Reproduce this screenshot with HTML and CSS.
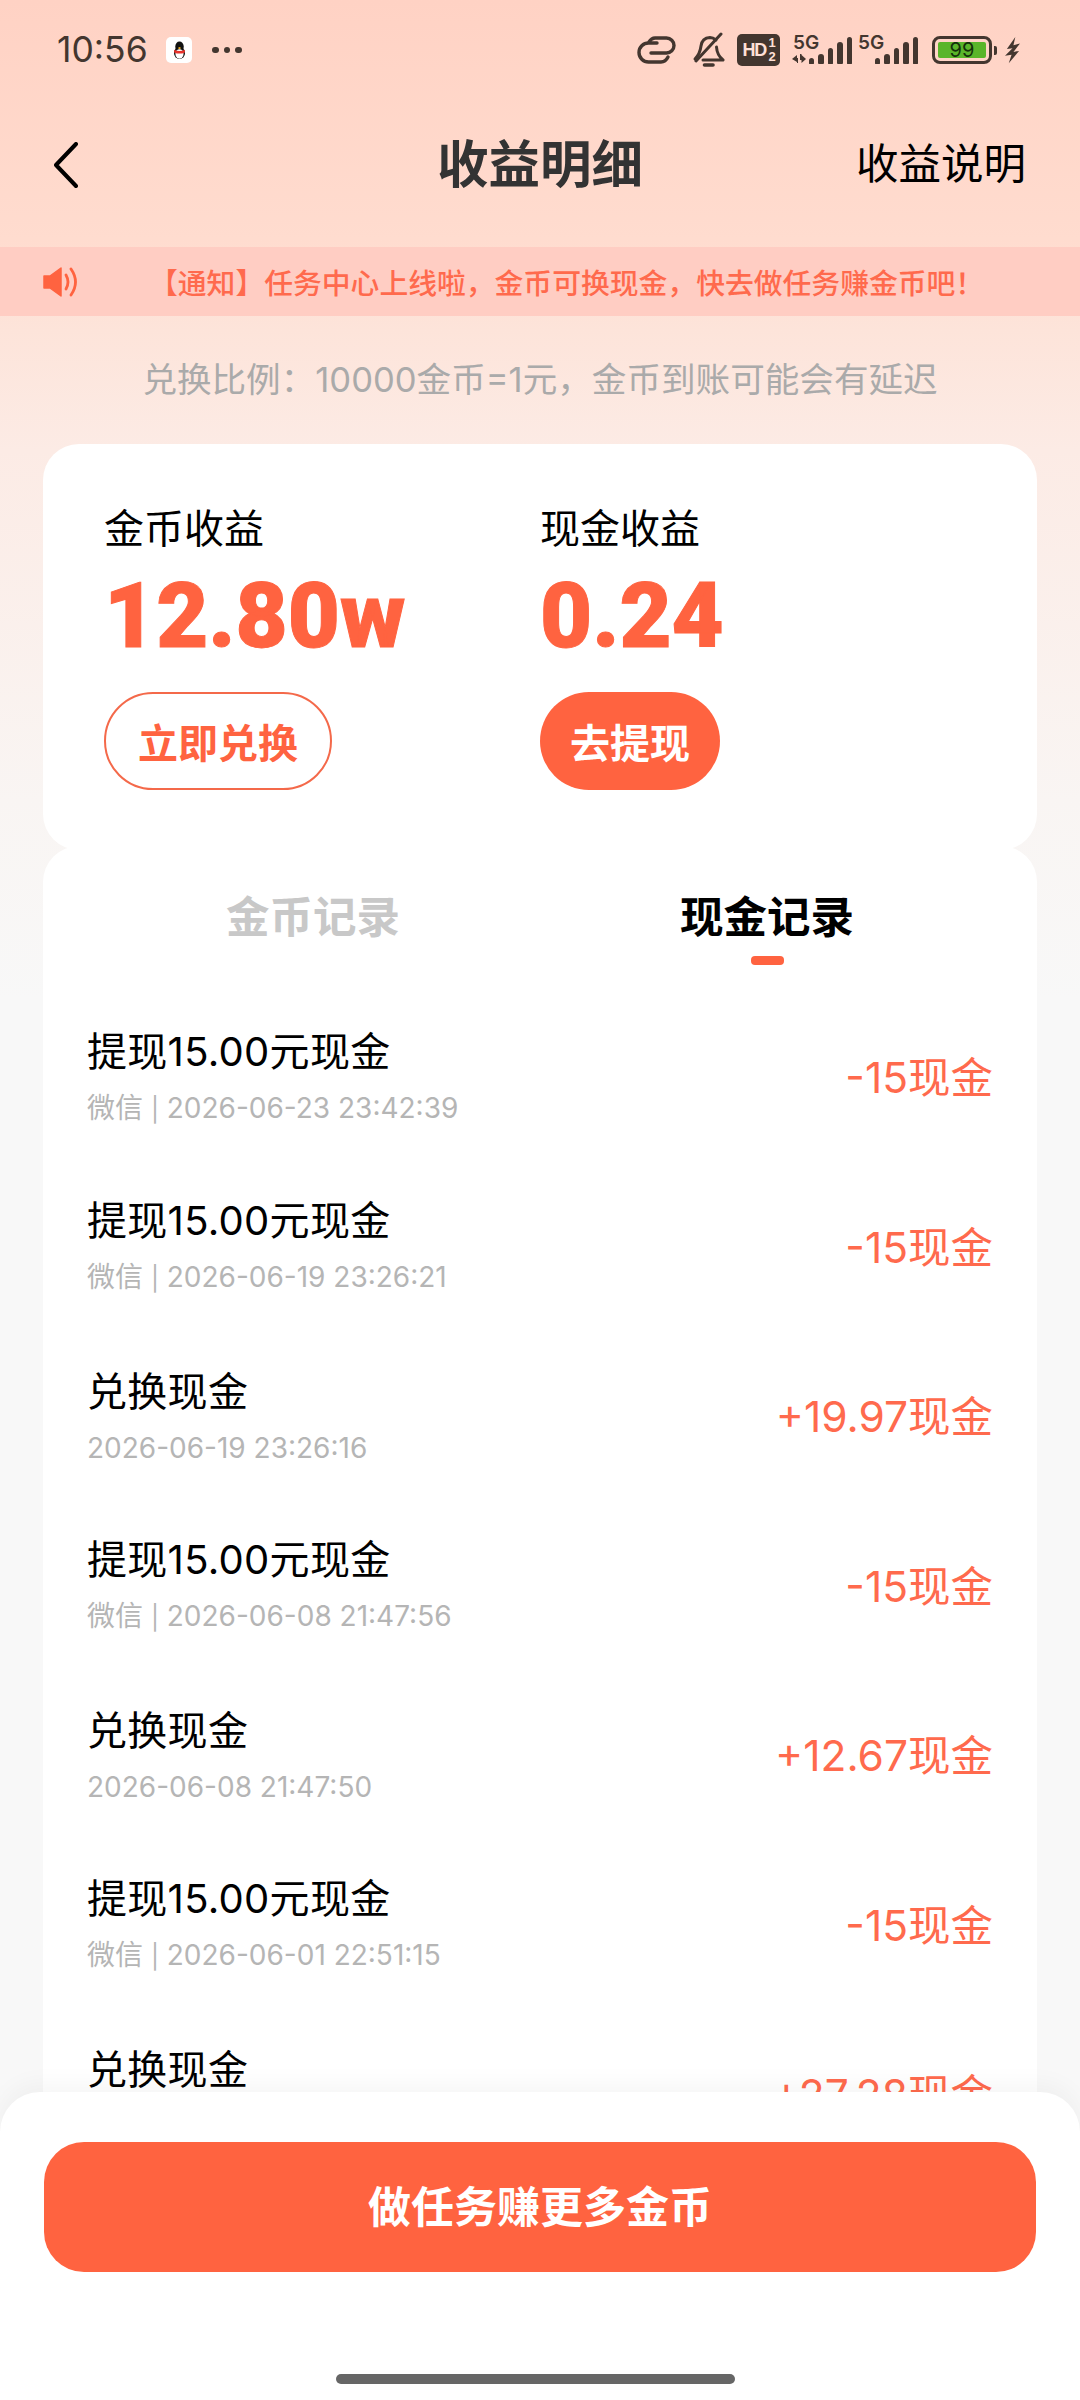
FILE: index.html
```html
<!DOCTYPE html>
<html lang="zh-CN">
<head>
  <meta charset="UTF-8" />
  <meta name="viewport" content="width=device-width, initial-scale=1.0"/>
  <title>收益明细</title>
  <link rel="stylesheet" href="styles.css">
</head>
<body>
<div class="page">

  <!-- status bar -->
  <div class="status-bar">
    <div class="status-left">
      <span class="time">10:56</span>
      <span class="qq-badge">
        <svg width="17" height="19" viewBox="0 0 20 22">
          <ellipse cx="10" cy="6.5" rx="5" ry="6" fill="#111"/>
          <ellipse cx="10" cy="14" rx="6.5" ry="7" fill="#111"/>
          <ellipse cx="10" cy="15" rx="4.8" ry="5.6" fill="#fff"/>
          <path d="M3.5 10 Q10 13 16.5 10 L16 13.5 Q10 15.5 4 13.5Z" fill="#e8322c"/>
          <path d="M8 8 L10 7 L12 8 L10 9.5Z" fill="#f5b21b"/>
        </svg>
      </span>
      <span class="dots"><i></i><i></i><i></i></span>
    </div>
    <div class="status-right">
      <svg class="ic-link" width="40" height="28" viewBox="0 0 40 28" fill="none" stroke="#43362f" stroke-width="3.4" stroke-linecap="round">
        <path d="M20 7 H11.5 a9.5 9.5 0 0 0 0 19 H24 q4.5 0 7 -5"/>
        <path d="M14 17 H29.5 a7.5 7.5 0 0 0 0 -15 H18 q-3.5 0 -6 4"/>
      </svg>
      <svg class="ic-bell" width="33" height="36" viewBox="0 0 33 36" fill="none" stroke="#43362f" stroke-width="3" stroke-linecap="round" stroke-linejoin="round">
        <path d="M3 27 Q8 22 9 14 Q10 6 18 5.5 Q21 5.5 24 8"/>
        <path d="M24.5 15 Q25 23 31 28 H11"/>
        <path d="M4 29 L29 2"/>
        <path d="M12.5 33 H21" stroke-width="3.6"/>
      </svg>
      <span class="hd-badge">HD<span class="hd-frac"><b>1</b><b>2</b></span></span>
      <span class="signal">
        <span class="five-g">5G</span>
        <span class="arrows">
          <svg width="14" height="10" viewBox="0 0 14 10" fill="#43362f"><path d="M0 5 L5 1 V4 H6 V9 H5 V8Z M8 0 H9.5 V1 L14 5 L9.5 9 V6 H8Z"/></svg>
        </span>
        <span class="bars"><i class="b1"></i><i class="b2"></i><i class="b3"></i><i class="b4"></i><i class="b5"></i></span>
      </span>
      <span class="signal signal-two">
        <span class="five-g">5G</span>
        <span class="bars"><i class="b1"></i><i class="b2"></i><i class="b3"></i><i class="b4"></i><i class="b5"></i></span>
      </span>
      <span class="battery"><span class="battery-fill">99</span></span>
      <span class="battery-tip"></span>
      <svg class="ic-bolt" width="15" height="28" viewBox="0 0 16 28" fill="#43362f"><path d="M11 0 L2 13 L8 12 L0 20 L7 19 L4 28 L15 15 L9 16 L16 7 L9 9Z"/></svg>
    </div>
  </div>

  <!-- header -->
  <div class="header">
    <svg class="back" width="24" height="46" viewBox="0 0 24 46" fill="none" stroke="#000" stroke-width="4" stroke-linecap="round" stroke-linejoin="round"><path d="M22 2 L2 23 L22 44"/></svg>
    <h1 class="title">收益明细</h1>
    <span class="header-link">收益说明</span>
  </div>

  <!-- notice -->
  <div class="notice">
    <svg class="speaker" width="34" height="30" viewBox="0 0 32 30" fill="none">
      <path d="M0 9 H6 L17 1 V29 L6 21 H0Z" fill="#ff6340" stroke="#ff6340" stroke-width="1.5" stroke-linejoin="round"/>
      <path d="M22 8 Q26 15 22 22" stroke="#ff6340" stroke-width="2.8" stroke-linecap="round"/>
      <path d="M27 2 Q36 15 27 28" stroke="#ff6340" stroke-width="2.8" stroke-linecap="round"/>
    </svg>
    <span class="notice-text">【通知】任务中心上线啦&#xFF0C;金币可换现金&#xFF0C;快去做任务赚金币吧&#xFF01;</span>
  </div>

  <p class="ratio">兑换比例&#xFF1A;10000金币=1元&#xFF0C;金币到账可能会有延迟</p>

  <!-- earnings card -->
  <div class="card earnings">
    <div class="earn-col earn-coin">
      <div class="earn-label">金币收益</div>
      <div class="earn-value">12.80w</div>
      <div class="btn-small btn-outline">立即兑换</div>
    </div>
    <div class="earn-col">
      <div class="earn-label">现金收益</div>
      <div class="earn-value">0.24</div>
      <div class="btn-small btn-fill">去提现</div>
    </div>
  </div>

  <!-- records -->
  <div class="card records">
    <div class="tabs">
      <div class="tab">金币记录</div>
      <div class="tab tab-active">现金记录</div>
    </div>

    <div class="row">
      <div><div class="row-title">提现15.00元现金</div><div class="row-sub">微信 <span class="sep">|</span> 2026-06-23 23:42:39</div></div>
      <div class="row-amount">-15现金</div>
    </div>
    <div class="row">
      <div><div class="row-title">提现15.00元现金</div><div class="row-sub">微信 <span class="sep">|</span> 2026-06-19 23:26:21</div></div>
      <div class="row-amount">-15现金</div>
    </div>
    <div class="row">
      <div><div class="row-title">兑换现金</div><div class="row-sub">2026-06-19 23:26:16</div></div>
      <div class="row-amount">+19.97现金</div>
    </div>
    <div class="row">
      <div><div class="row-title">提现15.00元现金</div><div class="row-sub">微信 <span class="sep">|</span> 2026-06-08 21:47:56</div></div>
      <div class="row-amount">-15现金</div>
    </div>
    <div class="row">
      <div><div class="row-title">兑换现金</div><div class="row-sub">2026-06-08 21:47:50</div></div>
      <div class="row-amount">+12.67现金</div>
    </div>
    <div class="row">
      <div><div class="row-title">提现15.00元现金</div><div class="row-sub">微信 <span class="sep">|</span> 2026-06-01 22:51:15</div></div>
      <div class="row-amount">-15现金</div>
    </div>
    <div class="row">
      <div><div class="row-title">兑换现金</div><div class="row-sub">2026-06-01 22:51:10</div></div>
      <div class="row-amount">+27.28现金</div>
    </div>
  </div>

  <!-- bottom sheet -->
  <div class="sheet">
    <div class="sheet-btn">做任务赚更多金币</div>
    <div class="home-bar"></div>
  </div>

</div>
</body>
</html>
```
FILE: styles.css
```css
* {
  box-sizing: border-box;
}

html, body {
  margin: 0;
  padding: 0;
}

body {
  font-family: Inter, "Noto Sans CJK SC", sans-serif;
  color: #000;
}

.page {
  position: relative;
  width: 1080px;
  height: 2400px;
  overflow: hidden;
  background: linear-gradient(180deg, #ffd2c4 0, #ffdccf 240px, #fde4da 330px, #fcebe5 450px, #f9f5f3 800px, #f8f8f8 1000px, #f8f8f8 100%);
}

/* status bar */
.status-bar {
  height: 100px;
  padding: 28px 60px 0 57px;
  display: flex;
  justify-content: space-between;
  align-items: flex-start;
  color: #43362f;
}

.status-left {
  display: flex;
  align-items: center;
  height: 44px;
}

.time {
  font-size: 35.5px;
  line-height: 44px;
  width: 109px;
}

.qq-badge {
  width: 26px;
  height: 26px;
  background: #fff;
  border-radius: 5px;
  display: flex;
  align-items: center;
  justify-content: center;
}

.dots {
  display: flex;
  gap: 5px;
  margin-left: 20px;
}

.dots i {
  width: 6.5px;
  height: 6.5px;
  border-radius: 50%;
  background: #43362f;
}

.status-right {
  display: flex;
  align-items: center;
  height: 44px;
}

.ic-bell {
  margin-left: 15px;
}

.hd-badge {
  margin-left: 12px;
  width: 43px;
  height: 32px;
  border-radius: 5px;
  background: #43362f;
  color: #ffe0d6;
  font-family: "Liberation Sans", sans-serif;
  font-size: 18px;
  font-weight: 700;
  display: flex;
  align-items: center;
  justify-content: center;
  letter-spacing: -1px;
}

.hd-frac {
  display: flex;
  flex-direction: column;
  font-size: 13px;
  line-height: 14px;
  margin-left: 2px;
}

.hd-frac b {
  display: block;
}

.signal {
  position: relative;
  width: 61px;
  height: 32px;
  margin-left: 11px;
}

.signal-two {
  width: 60px;
  margin-left: 6px;
}

.five-g {
  position: absolute;
  left: 2px;
  top: -1px;
  font-size: 19px;
  line-height: 19px;
  font-weight: 600;
  color: #43362f;
}

.signal-two .five-g {
  left: 0;
}

.arrows {
  position: absolute;
  left: 1px;
  top: 20px;
  line-height: 0;
}

.bars {
  position: absolute;
  right: 0;
  bottom: 2px;
  display: flex;
  align-items: flex-end;
  gap: 4px;
}

.bars i {
  width: 5.5px;
  border-radius: 3px 3px 1px 1px;
  background: #43362f;
}

.bars .b1 { height: 6px; }
.bars .b2 { height: 10px; }
.bars .b3 { height: 16px; }
.bars .b4 { height: 22px; }
.bars .b5 { height: 27px; }

.battery {
  margin-left: 14px;
  width: 60px;
  height: 28px;
  border: 3px solid #43362f;
  border-radius: 8px;
  padding: 3px;
  display: flex;
}

.battery-fill {
  width: 48px;
  background: #5ab52a;
  border-radius: 2px;
  color: #14300a;
  font-size: 20px;
  line-height: 16px;
  text-align: center;
}

.battery-tip {
  width: 3px;
  height: 9px;
  border-radius: 0 2px 2px 0;
  background: #43362f;
  margin-left: 2px;
}

.ic-bolt {
  margin-left: 8px;
}

/* header */
.header {
  height: 147px;
  padding: 0 54px 20px 54px;
  display: flex;
  align-items: center;
  justify-content: space-between;
  position: relative;
}

.back {
  margin-top: 2px;
}

.title {
  position: absolute;
  left: 0;
  right: 0;
  margin: 0 0 6px;
  text-align: center;
  font-size: 51.5px;
  font-weight: 700;
  color: #333;
}

.header-link {
  font-size: 42.5px;
  margin-bottom: 6px;
}

/* notice */
.notice {
  height: 69px;
  background: #ffcdc3;
  display: flex;
  align-items: center;
  padding-left: 43px;
}

.speaker {
  width: 34px;
  height: 30px;
}

.notice-text {
  margin-left: 72px;
  font-size: 28.8px;
  font-weight: 500;
  color: #ff6a4d;
  white-space: nowrap;
}

.ratio {
  margin: 0;
  height: 128px;
  line-height: 126px;
  text-align: center;
  font-size: 34.6px;
  color: #aaa;
}

/* cards */
.card {
  margin: 0 43px;
  background: #fff;
  border-radius: 36px;
}

.earnings {
  height: 406px;
  padding: 60px 0 0 61px;
  display: flex;
}

.earn-col {
  display: flex;
  flex-direction: column;
  align-items: flex-start;
}

.earn-coin {
  width: 436px;
}

.earn-label {
  font-size: 40px;
  line-height: 50px;
}

.earn-value {
  font-family: Roboto, sans-serif;
  font-size: 90px;
  font-weight: 900;
  line-height: 106px;
  margin-top: 10px;
  color: #ff6340;
  -webkit-text-stroke: 1px #ff6340;
}

.btn-small {
  height: 98px;
  margin-top: 22px;
  border-radius: 49px;
  font-size: 40px;
  font-weight: 700;
  display: flex;
  align-items: center;
  justify-content: center;
}

.btn-outline {
  width: 228px;
  border: 2px solid #f4694a;
  color: #ff6340;
}

.btn-fill {
  width: 180px;
  background: #ff6340;
  color: #fff;
}

.records {
  margin-top: -4px;
  height: 1600px;
  overflow: hidden;
}

.tabs {
  height: 146px;
  padding: 0 43px;
  display: flex;
}

.tab {
  flex: 1;
  padding-top: 44px;
  text-align: center;
  font-size: 43.5px;
  font-weight: 700;
  color: #c8c8c8;
  line-height: 54px;
  position: relative;
}

.tab-active {
  color: #000;
}

.tab-active::after {
  content: "";
  position: absolute;
  left: 50%;
  bottom: 27px;
  width: 33px;
  height: 9px;
  margin-left: -16px;
  border-radius: 4px;
  background: #ff6340;
}

.row {
  height: 169.5px;
  padding: 2px 44px 0;
  display: flex;
  justify-content: space-between;
  align-items: center;
}

.row-title {
  font-size: 40px;
  line-height: 52px;
  letter-spacing: 0.3px;
}

.row-sub {
  font-size: 28px;
  line-height: 40px;
  margin-top: 10px;
  color: #b5b5b5;
}

.sep {
  font-size: 24px;
}

.row-amount {
  font-size: 42.5px;
  margin-bottom: 6px;
  color: #ff6a4d;
}

/* bottom sheet */
.sheet {
  position: absolute;
  left: 0;
  right: 0;
  bottom: 0;
  height: 308px;
  padding: 50px 44px 0;
  background: #fff;
  border-radius: 40px 40px 0 0;
  box-shadow: 0 -8px 24px rgba(0, 0, 0, 0.04);
}

.sheet-btn {
  height: 130px;
  padding-bottom: 6px;
  border-radius: 40px;
  background: #ff6340;
  color: #fff;
  font-size: 43px;
  font-weight: 700;
  display: flex;
  align-items: center;
  justify-content: center;
}

.home-bar {
  position: absolute;
  left: 336px;
  top: 282px;
  width: 399px;
  height: 10px;
  border-radius: 5px;
  background: #666;
}
```
